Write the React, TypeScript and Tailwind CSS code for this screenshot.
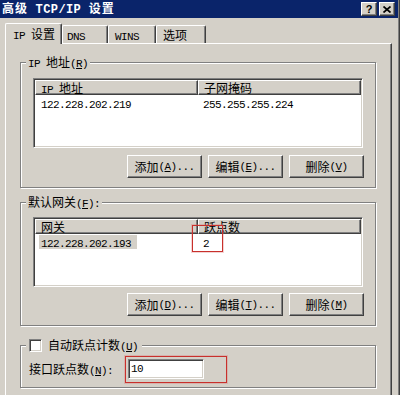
import type { ReactNode } from 'react';

const LAT = "font-['Liberation_Mono',monospace] text-[11px] tracking-[-0.6px]";
const RAISED =
  'border border-t-white border-l-white border-r-[#404040] border-b-[#404040] shadow-[inset_-1px_-1px_0_#808080]';
const SUNKEN =
  'border border-t-[#808080] border-l-[#808080] border-r-white border-b-white shadow-[inset_1px_1px_0_#404040,inset_-1px_-1px_0_#d4d0c8]';

// splits a label into latin / cjk runs; "&" marks the mnemonic letter
function Label({ text }: { text: string }) {
  const runs = text.match(/[\x20-\x7e]+|[^\x20-\x7e]+/g) ?? [];
  return (
    <>
      {runs.map((run, i) => {
        if (!/^[\x20-\x7e]/.test(run)) return <span key={i}>{run}</span>;
        const pieces = run.split('&');
        return (
          <span key={i} className={LAT}>
            {pieces[0]}
            {pieces.slice(1).map((p, j) => (
              <span key={j}>
                <span className="underline underline-offset-[1px]">{p[0]}</span>
                {p.slice(1)}
              </span>
            ))}
          </span>
        );
      })}
    </>
  );
}

function Btn({ label }: { label: string }) {
  return (
    <button type="button" className={`w-[75px] h-[23px] flex items-center justify-center bg-[#d4d0c8] ${RAISED}`}>
      <Label text={label} />
    </button>
  );
}

function Group({ legend, className, children }: { legend: ReactNode; className: string; children: ReactNode }) {
  return (
    <fieldset
      className={`ml-[14px] w-[356px] border border-[#808080] shadow-[inset_1px_1px_0_#fff,1px_1px_0_#fff] ${className}`}
    >
      {legend}
      {children}
    </fieldset>
  );
}

function TextLegend({ text }: { text: string }) {
  return (
    <legend className="ml-[5px] px-[2px] h-[14px] leading-[14px] whitespace-nowrap bg-[#d4d0c8]">
      <Label text={text} />
    </legend>
  );
}

type Row = { a: string; b: string; selected?: boolean };

function ListView({ cols, rows, children }: { cols: [string, string]; rows: Row[]; children?: ReactNode }) {
  return (
    <div className={`relative ml-[12px] w-[330px] h-[70px] bg-white p-[1px] ${SUNKEN}`}>
      <div className="flex h-[15px]">
        <div className={`w-[163px] bg-[#d4d0c8] pl-[5px] leading-[13px] ${RAISED}`}>
          <Label text={cols[0]} />
        </div>
        <div className={`flex-1 bg-[#d4d0c8] pl-[5px] leading-[13px] ${RAISED}`}>
          <Label text={cols[1]} />
        </div>
      </div>
      {rows.map((r) => (
        <div key={r.a} className="flex h-[14px] mt-[1px]">
          <div className={`w-[163px] ${r.selected ? 'pl-[4px]' : 'pl-[6px]'}`}>
            <span className={r.selected ? 'bg-[#d4d0c8] pl-[2px] pr-[6px] inline-block h-[14px]' : ''}>
              <Label text={r.a} />
            </span>
          </div>
          <div className="flex-1 pl-[5px]">
            <Label text={r.b} />
          </div>
        </div>
      ))}
      {children}
    </div>
  );
}

function CaptionBtn({ children }: { children: ReactNode }) {
  return (
    <div className={`w-[16px] h-[14px] bg-[#d4d0c8] flex items-center justify-center ${RAISED}`}>{children}</div>
  );
}

export default function App() {
  return (
    <div className="w-[400px] h-[395px] overflow-hidden bg-[#d4d0c8] text-black text-[12px] leading-[14px] font-['Noto_Sans_CJK_SC',sans-serif] border-r border-r-[#404040] shadow-[inset_-1px_0_0_#808080]">
      {/* title bar */}
      <div className="w-[398px] h-[18px] bg-[#0a246a] flex items-center justify-between pl-[2px] pr-[3px] text-white font-bold">
        <div className="text-[12px] leading-[16px] tracking-[1px] whitespace-nowrap">
          高级<span className="font-['Liberation_Mono',monospace] text-[12px] tracking-[0.4px]"> TCP/IP </span>设置
        </div>
        <div className="flex gap-[2px]">
          <CaptionBtn>
            <span className="text-black font-['Liberation_Sans',sans-serif] font-bold text-[11px] leading-none">?</span>
          </CaptionBtn>
          <CaptionBtn>
            <svg width="8" height="7" viewBox="0 0 8 7">
              <path d="M0.5 0.5 L7.5 6.5 M7.5 0.5 L0.5 6.5" stroke="#000" strokeWidth="1.7" fill="none" />
            </svg>
          </CaptionBtn>
        </div>
      </div>

      {/* tabs */}
      <div className="flex items-end h-[25px] pl-[5px]">
        <div className="relative z-10 -mb-px h-[21px] w-[57px] bg-[#d4d0c8] border-t border-l border-r border-t-white border-l-white border-r-[#404040] rounded-t-[2px] shadow-[inset_-1px_0_0_#808080] pl-[7px] pt-[3px]">
          <Label text="IP 设置" />
        </div>
        <div className="h-[18px] w-[46px] border-t border-l border-r border-t-white border-l-white border-r-[#404040] rounded-t-[2px] shadow-[inset_-1px_0_0_#808080] pl-[4px] pt-[2px]">
          <Label text="DNS" />
        </div>
        <div className="h-[18px] w-[48px] border-t border-l border-r border-t-white border-l-white border-r-[#404040] rounded-t-[2px] shadow-[inset_-1px_0_0_#808080] pl-[6px] pt-[2px]">
          <Label text="WINS" />
        </div>
        <div className="h-[18px] w-[50px] border-t border-l border-r border-t-white border-l-white border-r-[#404040] rounded-t-[2px] shadow-[inset_-1px_0_0_#808080] pl-[6px] pt-[2px]">
          <Label text="选项" />
        </div>
      </div>

      {/* tab page */}
      <div className="ml-[5px] w-[387px] h-[360px] border-t border-l border-r border-t-white border-l-white border-r-[#404040] shadow-[inset_-1px_0_0_#808080]">
        <Group className="mt-[11px] pt-[9px] pb-[9px]" legend={<TextLegend text="IP 地址(&R)" />}>
          <ListView cols={['IP 地址', '子网掩码']} rows={[{ a: '122.228.202.219', b: '255.255.255.224' }]} />
          <div className="flex justify-end gap-[6px] pr-[11px] mt-[7px]">
            <Btn label="添加(&A)..." />
            <Btn label="编辑(&E)..." />
            <Btn label="删除(&V)" />
          </div>
        </Group>

        <Group className="mt-[7px] pt-[8px] pb-[9px]" legend={<TextLegend text="默认网关(&F):" />}>
          <ListView cols={['网关', '跃点数']} rows={[{ a: '122.228.202.193', b: '2', selected: true }]}>
            <div className="absolute left-[158px] top-[7px] w-[31px] h-[27px] border border-[#c8302c] shadow-[0_0_0_1px_rgba(220,110,110,0.3)]" />
          </ListView>
          <div className="flex justify-end gap-[6px] pr-[11px] mt-[6px]">
            <Btn label="添加(&D)..." />
            <Btn label="编辑(&T)..." />
            <Btn label="删除(&M)" />
          </div>
        </Group>

        <Group
          className="mt-[12px] pt-[4px] pb-[4px]"
          legend={
            <legend className="ml-[5px] pl-[3px] pr-[2px] w-[116px] h-[14px] leading-[14px] whitespace-nowrap bg-[#d4d0c8]">
              <span className={`inline-block align-[-2px] mr-[6px] w-[13px] h-[13px] bg-white ${SUNKEN}`} />
              <span>自动跃点计数</span>
              <span className={LAT}>
                (<span className="underline underline-offset-[1px]">U</span>)
              </span>
            </legend>
          }
        >
          <div className="flex items-center pl-[8px]">
            <span className="w-[96px] whitespace-nowrap">
              <Label text="接口跃点数(&N):" />
            </span>
            <div className="border border-[#c8302c] shadow-[0_0_0_1px_rgba(220,110,110,0.3)] pl-[2px] pt-[2px] pr-[22px] pb-[3px]">
              <div className={`w-[76px] h-[20px] bg-white pl-[2px] flex items-center ${SUNKEN}`}>
                <Label text="10" />
              </div>
            </div>
          </div>
        </Group>
      </div>
    </div>
  );
}
